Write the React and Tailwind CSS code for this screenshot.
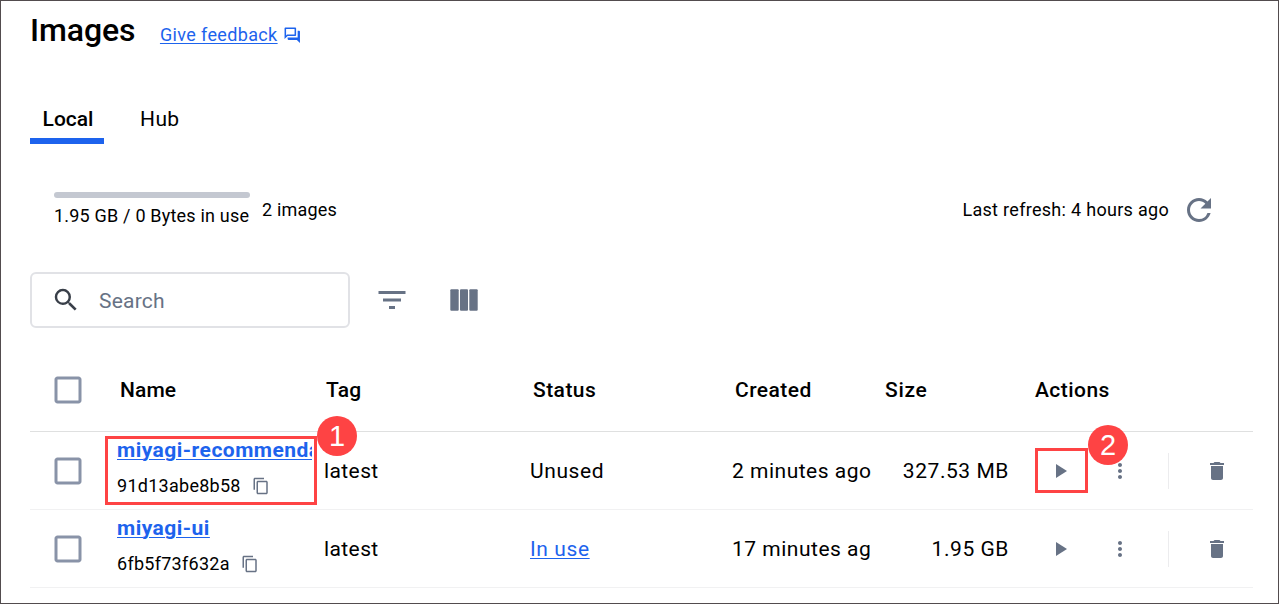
import {
  MdCheckBoxOutlineBlank,
  MdContentCopy,
  MdDelete,
  MdFilterList,
  MdMoreVert,
  MdOutlineForum,
  MdPlayArrow,
  MdRefresh,
  MdSearch,
} from "react-icons/md";

const GRID = "grid grid-cols-[87px_206px_207px_201px_154px_150px_218px] items-center";

const images = [
  { name: "miyagi-recommendation", id: "91d13abe8b58", tag: "latest", status: "Unused", created: "2 minutes ago", size: "327.53 MB" },
  { name: "miyagi-ui", id: "6fb5f73f632a", tag: "latest", status: "In use", created: "17 minutes ago", size: "1.95 GB" },
];

function Checkbox() {
  return (
    <div className="pl-5">
      <MdCheckBoxOutlineBlank size={36} className="text-[#8993a8]" />
    </div>
  );
}

function ColumnsIcon() {
  return (
    <svg width="28" height="22" viewBox="0 0 28 22" fill="#677285">
      <rect x="0.3" y="0.2" width="8.4" height="21.6" rx="1" />
      <rect x="10" y="0.2" width="8" height="21.6" rx="1" />
      <rect x="19.3" y="0.2" width="8.4" height="21.6" rx="1" />
    </svg>
  );
}

function Row({ image }) {
  return (
    <div className={`${GRID} h-[78px] border-b border-[#f1f1f2] tracking-[0.5px]`}>
      <Checkbox />
      <div className="w-[195px] overflow-hidden pb-0.5">
        <a className="block whitespace-nowrap text-[21px] leading-[32px] font-bold tracking-[0.48px] text-[#1d63ed] underline decoration-1 underline-offset-[2px]">
          {image.name}
        </a>
        <div className="flex h-10 items-center gap-[11.5px] text-lg leading-6 tracking-[0.27px]">
          <span>{image.id}</span>
          <MdContentCopy size={18} className="text-[#677285]" />
        </div>
      </div>
      <span className="pl-px tracking-[0.4px]">{image.tag}</span>
      {image.status === "In use" ? (
        <a className="tracking-[0.6px] text-[#1d63ed] underline decoration-1 underline-offset-[2px]">{image.status}</a>
      ) : (
        <span className="tracking-[0.6px]">{image.status}</span>
      )}
      <span className="w-[140px] overflow-hidden pl-px whitespace-nowrap">{image.created}</span>
      <span className="w-[124px] text-right tracking-[0.55px] whitespace-nowrap">{image.size}</span>
      <div className="flex items-center pl-[13px] text-[#677285]">
        <MdPlayArrow size={24} />
        <MdMoreVert size={24} className="ml-9" />
        <div className="ml-9 h-9 w-px bg-[#ececee]" />
        <MdDelete size={24} className="ml-9" />
      </div>
    </div>
  );
}

export default function App() {
  return (
    <div className="relative h-[604px] w-[1279px] overflow-hidden border border-[#524c4e] bg-white pl-[29px] font-['Roboto',sans-serif] text-[21px] leading-[30px] text-black">
      <header className="flex h-[58px] items-center">
        <h1 className="text-[32px] leading-[38px] font-medium tracking-[-0.1px]">Images</h1>
        <a className="ml-[24.6px] flex items-center gap-[5px] pt-2.5 text-lg leading-6 tracking-[0.36px] text-[#1d63ed]">
          <span className="underline decoration-1 underline-offset-[2px]">Give feedback</span>
          <MdOutlineForum size={18.5} />
        </a>
      </header>

      <nav className="mt-10 flex h-[45px]">
        <div className="w-[74px] border-b-[6px] border-[#1d63ed] pt-[5px] pl-0.5 text-center font-medium">Local</div>
        <div className="ml-[36px] pt-[5px] tracking-[0.4px]">Hub</div>
      </nav>

      <section className="mt-12 flex h-9 items-center pl-6 text-lg leading-6">
        <div className="w-[196px] whitespace-nowrap">
          <div className="h-1.5 rounded-full bg-[#c4c8d1]" />
          <div className="mt-[6px] tracking-[0.2px]">1.95 GB / 0 Bytes in use</div>
        </div>
        <div className="ml-3 tracking-[0.2px]">2 images</div>
        <div className="ml-auto tracking-[0.3px]">Last refresh: 4 hours ago</div>
        <MdRefresh size={36} className="mr-[61px] ml-3 text-[#677285]" />
      </section>

      <section className="mt-11 flex h-14 items-center">
        <div className="flex h-14 w-80 items-center rounded-md border-2 border-[#e1e2e6] pl-[19px]">
          <MdSearch size={30} className="text-[#393f49]" />
          <span className="mt-0.5 ml-[18px] tracking-[0.2px] text-[#677285]">Search</span>
        </div>
        <MdFilterList size={36} className="ml-6 text-[#677285]" />
        <div className="ml-10">
          <ColumnsIcon />
        </div>
      </section>

      <section className="mt-[21px] w-[1223px]">
        <div className={`${GRID} h-[83px] border-b border-[#dfe0e0] font-medium tracking-[0.45px]`}>
          <Checkbox />
          <span className="pl-[3px] tracking-[0.1px]">Name</span>
          <span className="pl-[3px] tracking-[0.2px]">Tag</span>
          <span className="pl-[3px]">Status</span>
          <span className="pl-1">Created</span>
          <span className="tracking-[0.7px]">Size</span>
          <span>Actions</span>
        </div>
        {images.map((image) => (
          <Row key={image.id} image={image} />
        ))}
      </section>

      <div className="absolute top-[435px] left-[104px] h-[69px] w-[212px] border-[3px] border-[#fe4344]" />
      <div className="absolute top-[447px] left-[1034px] h-[45px] w-[53px] border-[3px] border-[#fe4344]" />
      <div className="absolute top-[415px] left-[316px] flex size-10 items-center justify-center rounded-full bg-[#fe4344] font-['Liberation_Sans',sans-serif] text-[29px] text-white">1</div>
      <div className="absolute top-[424px] left-[1087px] flex size-10 items-center justify-center rounded-full bg-[#fe4344] font-['Liberation_Sans',sans-serif] text-[29px] text-white">2</div>
    </div>
  );
}
